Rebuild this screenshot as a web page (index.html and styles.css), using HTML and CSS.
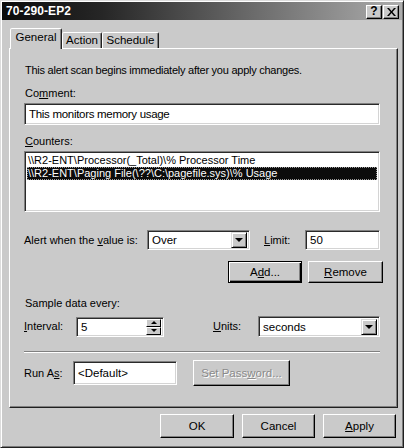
FILE: index.html
```html
<!DOCTYPE html>
<html>
<head>
<meta charset="utf-8">
<link rel="stylesheet" href="styles.css">
</head>
<body>
<div class="window">
  <div class="titlebar">
    <span class="title">70-290-EP2</span>
    <div class="tbtns">
      <span class="tbtn">?</span>
      <span class="tbtn close">
        <svg width="9" height="8" viewBox="0 0 9 8"><path d="M0 0h2l2.5 3 2.5-3h2l-3.5 4 3.5 4h-2l-2.5-3-2.5 3h-2l3.5-4z" fill="#000"/></svg>
      </span>
    </div>
  </div>
  <div class="tabs">
    <div class="tab active t-general">General</div>
    <div class="tab t-action">Action</div>
    <div class="tab t-schedule">Schedule</div>
  </div>
  <div class="panel">
    <div class="label intro">This alert scan begins immediately after you apply changes.</div>
    <div class="label lbl-comment">Co<u>m</u>ment:</div>
    <div class="field comment">This monitors memory usage</div>
    <div class="label lbl-counters"><u>C</u>ounters:</div>
    <div class="listbox">
      <div class="row">\\R2-ENT\Processor(_Total)\% Processor Time</div>
      <div class="row sel">\\R2-ENT\Paging File(\??\C:\pagefile.sys)\% Usage</div>
    </div>
    <div class="line alert-row">
      <span class="label w-alert">Alert when the <u>v</u>alue is:</span>
      <div class="field combo w-over"><span class="val">Over</span><span class="drop"><i class="tri"></i></span></div>
      <span class="label w-limit"><u>L</u>imit:</span>
      <div class="field w-limitbox">50</div>
    </div>
    <div class="line btn-row">
      <div class="btn default w-add">A<u>d</u>d...</div>
      <div class="btn w-remove"><u>R</u>emove</div>
    </div>
    <div class="label lbl-sample">Sample data every:</div>
    <div class="line interval-row">
      <span class="label w-interval"><u>I</u>nterval:</span>
      <div class="field spin w-spin"><span class="val">5</span><span class="spinbtns"><span class="sb"><i class="tri up"></i></span><span class="sb"><i class="tri"></i></span></span></div>
      <span class="label w-units"><u>U</u>nits:</span>
      <div class="field combo w-secs"><span class="val">seconds</span><span class="drop"><i class="tri"></i></span></div>
    </div>
    <div class="sep"></div>
    <div class="line runas-row">
      <span class="label w-runas">Run A<u>s</u>:</span>
      <div class="field w-runbox">&lt;Default&gt;</div>
      <div class="btn disabled w-setpw">Set Pass<u>w</u>ord...</div>
    </div>
  </div>
  <div class="footer">
    <div class="btn w-ok">OK</div>
    <div class="btn w-cancel">Cancel</div>
    <div class="btn w-apply"><u>A</u>pply</div>
  </div>
</div>
</body>
</html>
```
FILE: styles.css
```css
* { box-sizing: border-box; }
html, body { margin: 0; padding: 0; background: #c9c9c9; }
body {
  font-family: "Liberation Sans", Arial, sans-serif;
  font-size: 11px;
  color: #000;
}
u { text-decoration: underline; text-underline-offset: 1px; }

.window {
  width: 404px;
  height: 448px;
  background: #cacaca;
  border: 1px solid;
  border-color: #dcdcdc #202020 #202020 #dcdcdc;
  box-shadow: inset 1px 1px #ffffff, inset -1px -1px #7a7a7a;
  padding: 1px 1px 1px 1px;
}

.titlebar {
  height: 18px;
  background: linear-gradient(to right, #0b0b0b 0%, #262626 25%, #666666 60%, #acacac 100%);
  display: flex;
  align-items: center;
  justify-content: space-between;
  padding: 0 3px 0 3px;
}
.title {
  color: #fff;
  font-weight: bold;
  font-size: 12px;
  letter-spacing: 0.1px;
  margin-left: 1px;
}
.tbtns { display: flex; gap: 1px; margin-top: 1px; }
.tbtn {
  width: 16px;
  height: 14px;
  background: #cacaca;
  border: 1px solid;
  border-color: #fff #000 #000 #fff;
  box-shadow: inset -1px -1px #808080;
  font-weight: bold;
  font-size: 12px;
  line-height: 11px;
  display: flex;
  align-items: center;
  justify-content: center;
}

.tabs {
  display: flex;
  align-items: flex-end;
  height: 28px;
  padding-left: 8px;
  position: relative;
  z-index: 2;
}
.tab {
  height: 16px;
  border: 1px solid;
  border-bottom: none;
  border-color: #fff #202020 transparent #fff;
  box-shadow: inset -1px 0 #808080;
  border-radius: 2px 2px 0 0;
  font-size: 11.5px;
  line-height: 15px;
  text-align: center;
  background: #cacaca;
}
.tab.active {
  height: 21px;
  margin-bottom: -1px;
  line-height: 17px;
}
.t-general { width: 52px; }
.t-action { width: 40px; }
.t-schedule { width: 57px; }

.panel {
  margin: 0 4px 0 7px;
  height: 360px;
  border: 1px solid;
  border-color: #fff #202020 #202020 #fff;
  box-shadow: inset -1px -1px #808080;
  padding: 15px 14px 0 14px;
  position: relative;
  z-index: 1;
}

.label { line-height: 13px; white-space: nowrap; }
.intro { letter-spacing: -0.25px; padding-left: 1px; }
.lbl-comment { margin-top: 10px; padding-left: 1px; }
.lbl-counters { margin-top: 10px; padding-left: 1px; }
.lbl-sample { margin-top: 14px; padding-left: 1px; }

.field {
  background: #fff;
  border: 1px solid;
  border-color: #808080 #fff #fff #808080;
  box-shadow: inset 1px 1px #2a2a2a, inset -1px -1px #d4d4d4;
  padding: 3px 4px 0 4px;
  line-height: 14px;
  white-space: nowrap;
  overflow: hidden;
}
.comment { margin-top: 3px; height: 22px; width: 356px; padding-top: 3px; letter-spacing: -0.3px; font-size: 11.5px; }

.listbox {
  margin-top: 3px;
  width: 356px;
  height: 61px;
  background: #fff;
  border: 1px solid;
  border-color: #808080 #fff #fff #808080;
  box-shadow: inset 1px 1px #2a2a2a, inset -1px -1px #d4d4d4;
  padding: 2px 2px;
  font-size: 11px;
}
.row { height: 13px; line-height: 13px; padding-left: 1px; white-space: nowrap; }
.row.sel { background: #0c0c0c; color: #fff; outline: 1px dotted #999; outline-offset: -1px; }

.line { display: flex; align-items: center; }
.alert-row { margin-top: 18px; height: 20px; }
.w-alert { width: 123px; }
.w-over { width: 103px; height: 20px; }
.w-limit { width: 41px; margin-left: 14px; }
.w-limitbox { width: 75px; height: 20px; font-size: 11.5px; padding-top: 2px; }

.combo, .spin { display: flex; align-items: center; padding: 2px 2px 2px 4px; font-size: 11.5px; }
.combo .val, .spin .val { flex: 1; }
.drop {
  width: 16px;
  height: 16px;
  background: #cacaca;
  border: 1px solid;
  border-color: #dcdcdc #000 #000 #dcdcdc;
  box-shadow: inset 1px 1px #fff, inset -1px -1px #808080;
  display: flex;
  align-items: center;
  justify-content: center;
}
.tri {
  width: 0; height: 0;
  border-left: 4px solid transparent;
  border-right: 4px solid transparent;
  border-top: 4px solid #000;
}
.tri.up { border-top: none; border-bottom: 3px solid #000; }
.spin .tri { border-left-width: 3px; border-right-width: 3px; border-top-width: 3px; }

.btn-row { margin-top: 11px; justify-content: flex-end; gap: 6px; height: 22px; }
.btn {
  height: 22px;
  background: #cacaca;
  border: 1px solid;
  border-color: #fff #000 #000 #fff;
  box-shadow: inset -1px -1px #808080;
  display: flex;
  align-items: center;
  justify-content: center;
  font-size: 11.5px;
  white-space: nowrap;
}
.btn.default {
  border: 1px solid #000;
  box-shadow: inset 1px 1px #fff, inset -1px -1px #000, inset -2px -2px #808080;
}
.w-add { width: 74px; }
.w-remove { width: 75px; }

.interval-row { margin-top: 6px; height: 21px; }
.w-interval { width: 52px; }
.w-spin { width: 88px; height: 20px; }
.spinbtns { display: flex; flex-direction: column; width: 15px; height: 16px; }
.sb {
  flex: 1;
  background: #cacaca;
  border: 1px solid;
  border-color: #fff #000 #000 #fff;
  display: flex;
  align-items: center;
  justify-content: center;
}
.w-units { width: 45px; margin-left: 49px; }
.w-secs { width: 122px; height: 21px; }

.sep {
  margin-top: 14px;
  width: 356px;
  height: 2px;
  border-top: 1px solid #808080;
  border-bottom: 1px solid #fff;
}

.runas-row { margin-top: 7px; height: 26px; }
.w-runas { width: 49px; }
.w-runbox { width: 104px; height: 24px; font-size: 11.5px; padding-top: 4px; }
.w-setpw { width: 97px; height: 26px; margin-left: 16px; }
.btn.disabled { color: #8a8a8a; text-shadow: 1px 1px #fff; }

.footer {
  display: flex;
  justify-content: flex-end;
  gap: 8px;
  margin-top: 6px;
  padding-right: 6px;
}
.w-ok { width: 74px; height: 24px; }
.w-cancel { width: 73px; height: 24px; }
.w-apply { width: 73px; height: 24px; }
```
